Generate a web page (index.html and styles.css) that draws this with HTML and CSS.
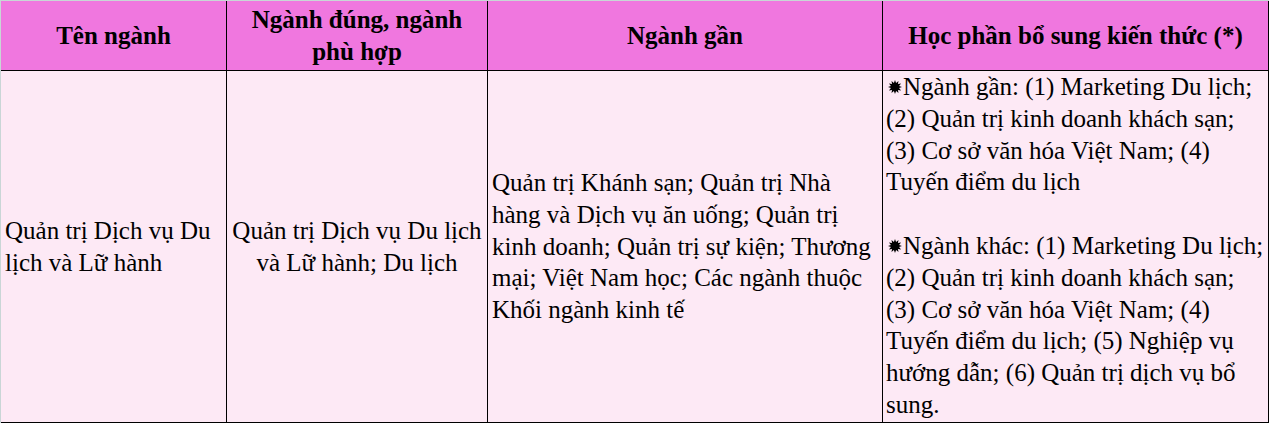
FILE: index.html
```html
<!DOCTYPE html>
<html lang="vi">
<head>
<meta charset="utf-8">
<title>Ngành gần</title>
<link rel="stylesheet" href="styles.css">
</head>
<body>
<div class="table">
  <div class="cell head">Tên ngành</div>
  <div class="cell head">Ngành đúng, ngành phù hợp</div>
  <div class="cell head">Ngành gần</div>
  <div class="cell head">Học phần bổ sung kiến thức (*)</div>

  <div class="cell body left">Quản trị Dịch vụ Du lịch và Lữ hành</div>
  <div class="cell body center">Quản trị Dịch vụ Du lịch và Lữ hành; Du lịch</div>
  <div class="cell body left">Quản trị Khánh sạn; Quản trị Nhà hàng và Dịch vụ ăn uống; Quản trị kinh doanh; Quản trị sự kiện; Thương mại; Việt Nam học; Các ngành thuộc Khối ngành kinh tế</div>
  <div class="cell body top">
    <p class="para"><svg class="star" viewBox="0 0 12 12" aria-hidden="true"><polygon points="6,0 6.93,2.52 9,0.8 8.55,3.45 11.2,3 9.48,5.07 12,6 9.48,6.93 11.2,9 8.55,8.55 9,11.2 6.93,9.48 6,12 5.07,9.48 3,11.2 3.45,8.55 0.8,9 2.52,6.93 0,6 2.52,5.07 0.8,3 3.45,3.45 3,0.8 5.07,2.52"/></svg>Ngành gần: (1) Marketing Du lịch; (2) Quản trị kinh doanh khách sạn; (3) Cơ sở văn hóa Việt Nam; (4) Tuyến điểm du lịch</p>
    <p class="para"><svg class="star" viewBox="0 0 12 12" aria-hidden="true"><polygon points="6,0 6.93,2.52 9,0.8 8.55,3.45 11.2,3 9.48,5.07 12,6 9.48,6.93 11.2,9 8.55,8.55 9,11.2 6.93,9.48 6,12 5.07,9.48 3,11.2 3.45,8.55 0.8,9 2.52,6.93 0,6 2.52,5.07 0.8,3 3.45,3.45 3,0.8 5.07,2.52"/></svg>Ngành khác: (1) Marketing Du lịch; (2) Quản trị kinh doanh khách sạn; (3) Cơ sở văn hóa Việt Nam; (4) Tuyến điểm du lịch; (5) Nghiệp vụ hướng dẫn; (6) Quản trị dịch vụ bổ sung.</p>
  </div>
</div>
</body>
</html>
```

FILE: styles.css
```css
html, body {
  margin: 0;
  padding: 0;
  background: #ffffff;
}

.table {
  display: grid;
  grid-template-columns: 226px 261px 395px 386px;
  grid-template-rows: 70px 352px;
  width: 1269px;
  border-top: 1px solid #c9d6d6;
  border-left: 1px solid #c9d6d6;
  box-sizing: border-box;
  font-family: "Liberation Serif", "Times New Roman", serif;
  color: #000;
}

.cell {
  box-sizing: border-box;
  border-right: 1px solid #000;
  border-bottom: 1px solid #000;
  display: flex;
  align-items: center;
  padding: 0 3px;
  font-size: 25px;
  line-height: 31.8px;
}

.head {
  background: #f077df;
  font-weight: bold;
  justify-content: center;
  text-align: center;
  line-height: 32px;
  padding: 1px 4px 0;
}

.body {
  background: #fde9f5;
}

.left {
  padding-left: 4px;
}

.center {
  justify-content: center;
  text-align: center;
}

.top {
  display: block;
  padding: 0 3px;
}

.para {
  margin: 0 0 31.8px;
}

.para:last-child {
  margin-bottom: 0;
}

.star {
  width: 14px;
  height: 14px;
  margin: 0 1px 0 2px;
  vertical-align: 1px;
  fill: #000;
}
```
